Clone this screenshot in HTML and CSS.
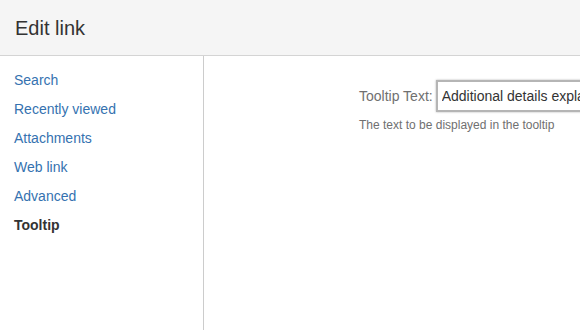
FILE: index.html
```html
<!DOCTYPE html>
<html>

<head>
    <title>Edit link</title>
    <link rel="stylesheet" href="styles.css">
</head>

<body>
    <div class="dialog">
        <div class="dialogHeader">
            <h2 class="dialogTitle">Edit link</h2>
        </div>

        <div class="dialogBody">
            <ul class="menu">
                <li class="menuItem"><a href="#">Search</a></li>
                <li class="menuItem"><a href="#">Recently viewed</a></li>
                <li class="menuItem"><a href="#">Attachments</a></li>
                <li class="menuItem"><a href="#">Web link</a></li>
                <li class="menuItem"><a href="#">Advanced</a></li>
                <li class="menuItem menuItem--selected"><a href="#">Tooltip</a></li>
            </ul>

            <div class="panel">
                <div class="fieldGroup">
                    <label class="fieldLabel" for="tooltipText">Tooltip Text:</label>
                    <input type="text" id="tooltipText" class="textInput" value="Additional details explaining the link">
                </div>
                <div class="fieldDescription">The text to be displayed in the tooltip</div>
            </div>
        </div>
    </div>
</body>

</html>
```

FILE: styles.css
```css
body {
    margin: 0;
    font-family: 'Liberation Sans', Arial, sans-serif;
    font-size: 14px;
    color: #333;
    background-color: #fff;
}

.dialog {
    width: 580px;
    height: 330px;
    display: flex;
    flex-direction: column;
    overflow: hidden;
}

.dialogHeader {
    flex: none;
    height: 55px;
    background-color: #f5f5f5;
    border-bottom: 1px solid #d4d4d4;
    padding: 0 15px;
    display: flex;
    align-items: center;
}

.dialogTitle {
    margin: 0;
    font-size: 20px;
    font-weight: normal;
    color: #333;
    padding-top: 2px;
}

.dialogBody {
    flex: 1;
    display: flex;
    min-width: 0;
}

.menu {
    flex: none;
    width: 204px;
    box-sizing: border-box;
    margin: 0;
    padding: 10px 0 0;
    list-style-type: none;
    border-right: 1px solid #ccc;
    white-space: nowrap;
}

.menuItem {
    line-height: 29px;
    padding: 0 14px;
}

.menuItem a {
    color: #3572b0;
    text-decoration: none;
}

.menuItem--selected a {
    color: #333;
    font-weight: bold;
}

.panel {
    flex: none;
    padding: 24px 0 0 155px;
}

.fieldGroup {
    display: flex;
    align-items: center;
    white-space: nowrap;
}

.fieldLabel {
    color: #707070;
    padding-right: 3px;
}

.textInput {
    width: 260px;
    height: 32px;
    box-sizing: border-box;
    padding: 0 4px;
    font-family: inherit;
    font-size: 14px;
    color: #333;
    border: 2px solid #b5b5b5;
    box-shadow: 0 0 2px rgba(0, 0, 0, 0.3);
    outline: none;
}

.fieldDescription {
    margin-top: 6px;
    font-size: 12px;
    color: #707070;
}
```
